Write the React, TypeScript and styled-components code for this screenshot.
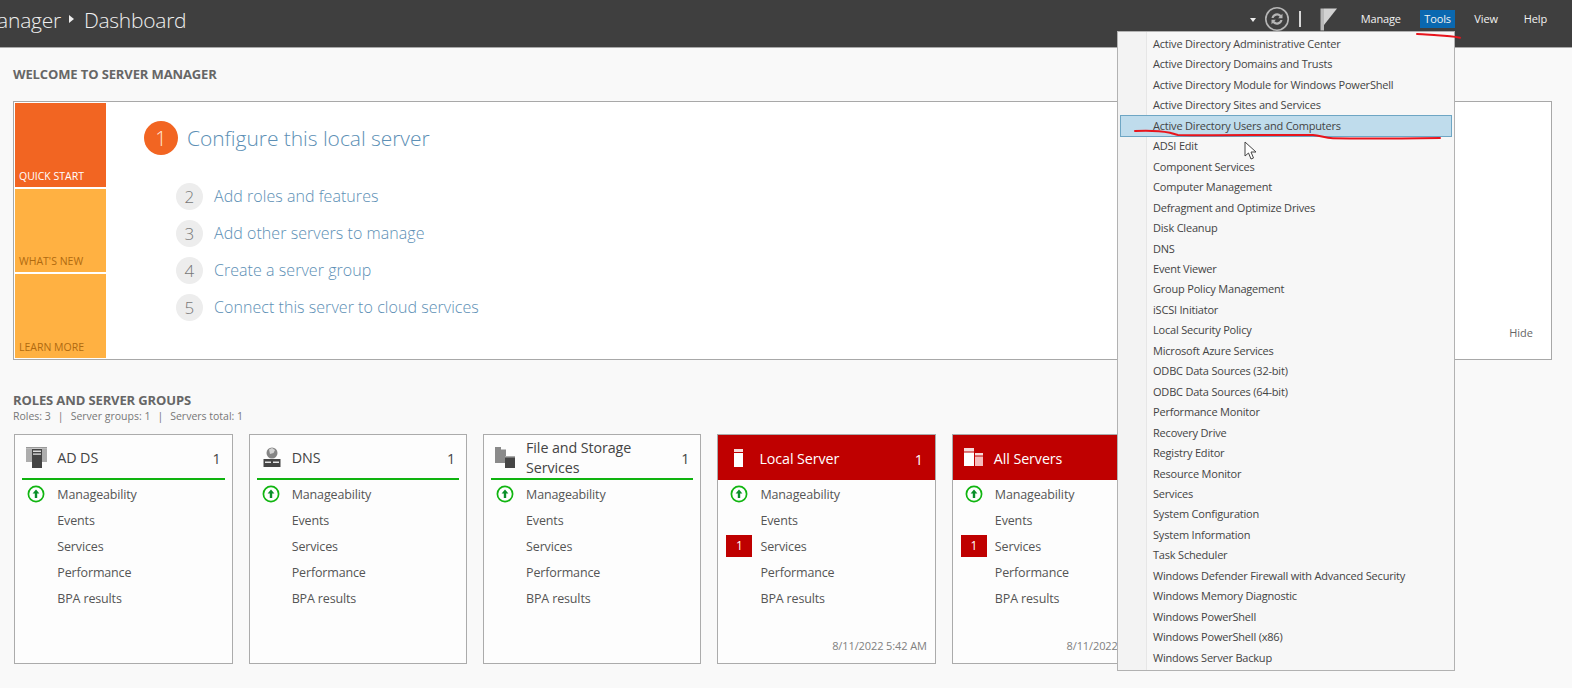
import React from 'react'
import styled, { createGlobalStyle } from 'styled-components'

const Global = createGlobalStyle`
  html, body { margin: 0; padding: 0; background: #f9f9f9; }
  body { width: 1572px; height: 688px; overflow: hidden; font-family: "Open Sans", "Noto Sans", "Liberation Sans", sans-serif; }
`

const Page = styled.div`
  position: relative;
  width: 1572px;
  height: 688px;
  overflow: hidden;
  background: #f9f9f9;
`

const Header = styled.header`
  height: 47px;
  background: #3f3f3f;
  border-bottom: 1px solid #a9a9a9;
  display: flex;
  align-items: center;
  overflow: hidden;
`

const Crumbs = styled.div`
  display: flex;
  align-items: center;
  margin-left: -85px;
  color: #f0f0f0;
  font-size: 21px;
  font-weight: 300;
  letter-spacing: -0.25px;
  padding-bottom: 7px;
`

const CrumbArrow = styled.span`
  width: 0;
  height: 0;
  margin: 0 10px 3px 8px;
  border-left: 5px solid #eee;
  border-top: 4px solid transparent;
  border-bottom: 4px solid transparent;
`

const HeaderRight = styled.div`
  margin-left: auto;
  display: flex;
  align-items: center;
  height: 36px;
  margin-bottom: 9px;
  padding-right: 19px;
`

const Caret = styled.span`
  width: 0;
  height: 0;
  margin-right: 8px;
  margin-top: 2px;
  border-top: 4px solid #eee;
  border-left: 3.5px solid transparent;
  border-right: 3.5px solid transparent;
`

const Divider = styled.span`
  width: 2px;
  height: 16px;
  margin: 0 19px 0 9px;
  background: #d8d8d8;
`

const NavItem = styled.span<{ $active?: boolean; $gap: number }>`
  display: inline-block;
  margin-left: ${p => p.$gap}px;
  padding: 0 ${p => (p.$active ? 4.5 : 6)}px;
  height: 18px;
  line-height: 18px;
  font-size: 11px;
  letter-spacing: -0.15px;
  color: #f2f2f2;
  background: ${p => (p.$active ? '#0a68b0' : 'transparent')};
`

const Main = styled.main`
  padding: 18px 20px 0 13px;
`

const SectionTitle = styled.h2`
  margin: 0;
  font-size: 13px;
  line-height: 16px;
  font-weight: 700;
  letter-spacing: -0.12px;
  color: #666;
`

const Welcome = styled.section`
  display: flex;
  margin-top: 19px;
  height: 259px;
  box-sizing: border-box;
  border: 1px solid #a8a8a8;
  background: #fff;
  padding: 1px;
`

const Tiles = styled.div`
  width: 91px;
  display: flex;
  flex-direction: column;
  gap: 2px;
`

const Tile = styled.div<{ $bg: string; $fg: string }>`
  flex: 1;
  display: flex;
  align-items: flex-end;
  padding: 0 0 4px 4px;
  background: ${p => p.$bg};
  color: ${p => p.$fg};
  font-size: 10.5px;
  line-height: 14px;
`

const Steps = styled.div`
  margin-left: 38px;
  padding-top: 18px;
  flex: 1;
`

const FirstStep = styled.div`
  display: flex;
  align-items: center;
  gap: 9px;
  height: 34px;
  color: #5c8fb5;
  font-size: 21px;
  font-weight: 300;
  letter-spacing: -0.05px;
`

const StepList = styled.div`
  margin: 28px 0 0 32px;
  display: flex;
  flex-direction: column;
  gap: 11px;
`

const Step = styled.div`
  display: flex;
  align-items: center;
  gap: 11px;
  height: 26px;
  color: #5c8fb5;
  font-size: 16px;
  font-weight: 300;
  letter-spacing: 0.05px;
`

const Bullet = styled.span<{ $big?: boolean }>`
  flex: none;
  display: flex;
  align-items: center;
  justify-content: center;
  width: ${p => (p.$big ? 34 : 27)}px;
  height: ${p => (p.$big ? 34 : 27)}px;
  border-radius: 50%;
  background: ${p => (p.$big ? '#f26522' : '#ededed')};
  color: ${p => (p.$big ? '#ffe9dc' : '#777')};
  font-size: ${p => (p.$big ? 20 : 17)}px;
  font-weight: 300;
`

const Hide = styled.span`
  align-self: flex-end;
  margin: 0 17px 18px 0;
  font-size: 11px;
  color: #666;
`

const RolesHead = styled.div`
  margin-top: 32px;
`

const Summary = styled.div`
  margin-top: 1px;
  display: flex;
  gap: 7px;
  font-size: 10.5px;
  line-height: 14px;
  color: #777;
`

const Cards = styled.div`
  display: flex;
  gap: 16px;
  margin: 11px 0 0 1.3px;
`

const Card = styled.article`
  flex: none;
  width: 218.4px;
  height: 230px;
  box-sizing: border-box;
  position: relative;
  border: 1px solid #ababab;
  background: #fdfdfd;
`

const CardHead = styled.div<{ $alert?: boolean }>`
  display: flex;
  align-items: center;
  height: 45px;
  box-sizing: border-box;
  margin: ${p => (p.$alert ? '0' : '0 7px')};
  padding: ${p => (p.$alert ? '3px 12px 0 10px' : '3px 4px 0 4px')};
  background: ${p => (p.$alert ? '#bf0000' : 'transparent')};
  border-bottom: ${p => (p.$alert ? 'none' : '2px solid #0fb30f')};
  color: ${p => (p.$alert ? '#fff' : '#444')};
  font-size: 14.3px;
`

const CardIcon = styled.span`
  flex: none;
  width: 31px;
  display: flex;
  align-items: center;
`

const CardName = styled.span`
  flex: 1;
  line-height: 20px;
  letter-spacing: -0.1px;
`

const CardRows = styled.div<{ $alert?: boolean }>`
  padding: ${p => (p.$alert ? '1px 0 0 0' : '0')};
  margin-top: ${p => (p.$alert ? '0' : '1px')};
`

const Row = styled.div`
  display: flex;
  align-items: center;
  height: 26px;
  color: #555;
  font-size: 12.5px;
  letter-spacing: -0.15px;
`

const RowMark = styled.span`
  flex: none;
  width: 42px;
  display: flex;
  justify-content: center;
`

const Badge = styled.span`
  display: block;
  width: 26px;
  height: 22px;
  line-height: 22px;
  text-align: center;
  background: #bf0000;
  color: #fff;
  font-size: 12px;
`

const Stamp = styled.span`
  position: absolute;
  right: 8px;
  bottom: 10px;
  font-size: 11px;
  letter-spacing: -0.1px;
  color: #808080;
`

const Menu = styled.div`
  position: absolute;
  left: 1117px;
  top: 31px;
  width: 338px;
  height: 640px;
  box-sizing: border-box;
  padding: 2px 3px 0 3px;
  border: 1px solid #b2b2b2;
  background: linear-gradient(to right, #f3f3f3 0, #f3f3f3 28px, #e6e6e6 28px, #e6e6e6 29px, #f7f7f7 29px);
`

const MenuItem = styled.div<{ $active?: boolean }>`
  height: 20.46px;
  line-height: 20px;
  box-sizing: border-box;
  padding-left: 32px;
  font-size: 11px;
  letter-spacing: -0.2px;
  color: #444;
  background: ${p => (p.$active ? '#bfdcec' : 'transparent')};
  outline: ${p => (p.$active ? '1px solid #6ea6c4' : 'none')};
`

const Ink = styled.svg`
  position: absolute;
  left: 0;
  top: 0;
  pointer-events: none;
`

const PointerSvg = styled.svg`
  position: absolute;
  left: 1244px;
  top: 141px;
`

const RefreshIcon = () => (
  <svg width="26" height="26" viewBox="0 0 26 26" fill="none">
    <circle cx="13" cy="13" r="11.2" stroke="#b5b5b5" strokeWidth="1.6" />
    <path d="M7.5 12a5.6 5.6 0 0 1 9.6-3l1.4-1.2v4.4h-4.4l1.5-1.5a3.6 3.6 0 0 0-6 1.3z" fill="#b5b5b5" />
    <path d="M18.5 14a5.6 5.6 0 0 1-9.6 3l-1.4 1.2v-4.4h4.4l-1.5 1.5a3.6 3.6 0 0 0 6-1.3z" fill="#b5b5b5" />
  </svg>
)

const FlagIcon = () => (
  <svg width="18" height="23" viewBox="0 0 18 23">
    <path d="M0.5 0.5h3.500v22h-3.500z" fill="#b9b9b9" />
    <path d="M4 0.5H17L4 17z" fill="#d2d2d2" />
  </svg>
)

const UpArrow = () => (
  <svg width="18" height="18" viewBox="0 0 18 18" fill="none">
    <circle cx="9" cy="9" r="7.6" stroke="#10b510" strokeWidth="1.7" fill="#fff" />
    <path d="M9 4.4 12.4 8.6H10.2V13H7.8V8.6H5.6z" fill="#0a8f2a" />
  </svg>
)

const AdIcon = () => (
  <svg width="22" height="22" viewBox="0 0 22 22">
    <path d="M0 0h21v1.500H0z" fill="#999" />
    <path d="M0 1.500h6V15H0zM16 1.500h5V15h-5z" fill="#adadad" />
    <path d="M6 2h10v19H6z" fill="#444" />
    <path d="M7 3.500h8v1.500H7z" fill="#ddd" />
    <path d="M7 6.500h8v1.200H7z" fill="#eee" />
  </svg>
)

const DnsIcon = () => (
  <svg width="22" height="22" viewBox="0 0 22 22">
    <circle cx="11" cy="6" r="5.500" fill="#858585" />
    <path d="M8 2.500 11 1l3 2-1.500 3-3.500 1z" fill="#d2d2d2" />
    <path d="M2.500 12h17v8h-17z" fill="#454545" />
    <path d="M4 14.500h6v1.500H4zM12 14.500h6v1.500h-6z" fill="#e6e6e6" />
  </svg>
)

const FilesIcon = () => (
  <svg width="22" height="22" viewBox="0 0 22 22">
    <path d="M0 0h6v2.500h5V9H10v7H0z" fill="#8a8a8a" />
    <path d="M10 9h10v12H10z" fill="#454545" />
    <path d="M10 9h10v1.500H10z" fill="#aaa" />
  </svg>
)

const ServerIcon = () => (
  <svg width="22" height="22" viewBox="0 0 22 22">
    <path d="M6 1h9v3H6z" fill="#f6dada" />
    <path d="M6 5h9v14H6z" fill="#fff" />
  </svg>
)

const ServersIcon = () => (
  <svg width="22" height="22" viewBox="0 0 22 22">
    <path d="M1 0h10v3.500H1z" fill="#f6dada" />
    <path d="M1 4.500h10V18H1z" fill="#fff" />
    <path d="M12 5h8v2.500h-8z" fill="#f6dada" />
    <path d="M12 8.500h8V18h-8z" fill="#f6bcbc" />
  </svg>
)

const Pointer = () => (
  <PointerSvg width="14" height="20" viewBox="0 0 14 20">
    <path d="M1 1v14l3.500-3 2.500 6 2.500-1-2.500-6H12z" fill="#fff" stroke="#444" strokeWidth="1" />
  </PointerSvg>
)

const tools = [
  'Active Directory Administrative Center',
  'Active Directory Domains and Trusts',
  'Active Directory Module for Windows PowerShell',
  'Active Directory Sites and Services',
  'Active Directory Users and Computers',
  'ADSI Edit',
  'Component Services',
  'Computer Management',
  'Defragment and Optimize Drives',
  'Disk Cleanup',
  'DNS',
  'Event Viewer',
  'Group Policy Management',
  'iSCSI Initiator',
  'Local Security Policy',
  'Microsoft Azure Services',
  'ODBC Data Sources (32-bit)',
  'ODBC Data Sources (64-bit)',
  'Performance Monitor',
  'Recovery Drive',
  'Registry Editor',
  'Resource Monitor',
  'Services',
  'System Configuration',
  'System Information',
  'Task Scheduler',
  'Windows Defender Firewall with Advanced Security',
  'Windows Memory Diagnostic',
  'Windows PowerShell',
  'Windows PowerShell (x86)',
  'Windows Server Backup'
]

// the last card runs under the open menu, its count is not visible
const cards = [
  { name: 'AD DS', icon: <AdIcon />, count: 1 },
  { name: 'DNS', icon: <DnsIcon />, count: 1 },
  { name: 'File and Storage Services', icon: <FilesIcon />, count: 1 },
  { name: 'Local Server', icon: <ServerIcon />, count: 1, alert: true, stamp: '8/11/2022 5:42 AM' },
  { name: 'All Servers', icon: <ServersIcon />, alert: true, stamp: '8/11/2022 5:42 AM' }
]

const rows = ['Manageability', 'Events', 'Services', 'Performance', 'BPA results']

export default function App() {
  return (
    <Page>
      <Global />
      <Header>
        <Crumbs>
          Server Manager
          <CrumbArrow />
          Dashboard
        </Crumbs>
        <HeaderRight>
          <Caret />
          <RefreshIcon />
          <Divider />
          <FlagIcon />
          <NavItem $gap={17}>Manage</NavItem>
          <NavItem $gap={13} $active>Tools</NavItem>
          <NavItem $gap={13}>View</NavItem>
          <NavItem $gap={14}>Help</NavItem>
        </HeaderRight>
      </Header>
      <Main>
        <SectionTitle>WELCOME TO SERVER MANAGER</SectionTitle>
        <Welcome>
          <Tiles>
            <Tile $bg="#f26522" $fg="#fff">QUICK START</Tile>
            <Tile $bg="#ffb142" $fg="#b06a10">WHAT'S NEW</Tile>
            <Tile $bg="#ffb142" $fg="#b06a10">LEARN MORE</Tile>
          </Tiles>
          <Steps>
            <FirstStep>
              <Bullet $big>1</Bullet>
              Configure this local server
            </FirstStep>
            <StepList>
              <Step><Bullet>2</Bullet>Add roles and features</Step>
              <Step><Bullet>3</Bullet>Add other servers to manage</Step>
              <Step><Bullet>4</Bullet>Create a server group</Step>
              <Step><Bullet>5</Bullet>Connect this server to cloud services</Step>
            </StepList>
          </Steps>
          <Hide>Hide</Hide>
        </Welcome>
        <RolesHead>
          <SectionTitle>ROLES AND SERVER GROUPS</SectionTitle>
          <Summary>
            <span>Roles: 3</span><span>|</span>
            <span>Server groups: 1</span><span>|</span>
            <span>Servers total: 1</span>
          </Summary>
        </RolesHead>
        <Cards>
          {cards.map(card => (
            <Card key={card.name}>
              <CardHead $alert={card.alert}>
                <CardIcon>{card.icon}</CardIcon>
                <CardName>{card.name}</CardName>
                {card.count && <span>{card.count}</span>}
              </CardHead>
              <CardRows $alert={card.alert}>
                {rows.map((row, i) => (
                  <Row key={row}>
                    <RowMark>
                      {i === 0 && <UpArrow />}
                      {i === 2 && card.alert && <Badge>1</Badge>}
                    </RowMark>
                    {row}
                  </Row>
                ))}
              </CardRows>
              {card.stamp && <Stamp>{card.stamp}</Stamp>}
            </Card>
          ))}
        </Cards>
      </Main>
      <Menu>
        {tools.map((tool, i) => (
          <MenuItem key={tool} $active={i === 4}>{tool}</MenuItem>
        ))}
      </Menu>
      <Pointer />
      <Ink width="1572" height="688" fill="none" stroke="#e8141c" strokeWidth="2" strokeLinecap="round">
        <path d="M1417 34c7 0 14 1 20 1.300 8 .4 16 1 23 2.400" />
        <path d="M1135 131c12-.6 24-.4 35 1.700 3 .6 5 2 8 2.300 40 .6 95-.3 135 0 7 .5 12 3 20 3.300 30 .5 70 .2 107-.3" />
      </Ink>
    </Page>
  )
}
